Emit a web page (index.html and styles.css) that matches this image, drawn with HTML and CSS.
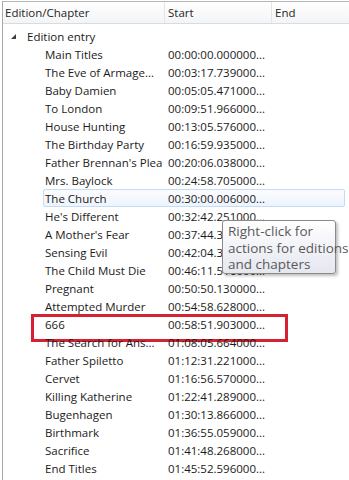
FILE: index.html
```html
<!DOCTYPE html>
<html lang="en">
<head>
  <meta charset="UTF-8" />
  <title>Chapters</title>
  <link rel="stylesheet" href="styles.css">
</head>
<body>
  <div class="tree">
    <div class="header">
      <div class="col">Edition/Chapter</div>
      <div class="col">Start</div>
      <div class="col">End</div>
    </div>

    <div class="body">
      <div class="edition">
        <span class="arrow"></span>
        <span>Edition entry</span>
      </div>

      <div class="row"><span class="name">Main Titles</span><span class="start">00:00:00.000000...</span></div>
      <div class="row"><span class="name">The Eve of Armage...</span><span class="start">00:03:17.739000...</span></div>
      <div class="row"><span class="name">Baby Damien</span><span class="start">00:05:05.471000...</span></div>
      <div class="row"><span class="name">To London</span><span class="start">00:09:51.966000...</span></div>
      <div class="row"><span class="name">House Hunting</span><span class="start">00:13:05.576000...</span></div>
      <div class="row"><span class="name">The Birthday Party</span><span class="start">00:16:59.935000...</span></div>
      <div class="row"><span class="name">Father Brennan's Plea</span><span class="start">00:20:06.038000...</span></div>
      <div class="row"><span class="name">Mrs. Baylock</span><span class="start">00:24:58.705000...</span></div>
      <div class="row hover"><span class="name">The Church</span><span class="start">00:30:00.006000...</span></div>
      <div class="row tip-anchor">
        <span class="name">He's Different</span><span class="start">00:32:42.251000...</span>
        <div class="tooltip">Right-click for<br>actions for editions<br>and chapters</div>
      </div>
      <div class="row"><span class="name">A Mother's Fear</span><span class="start">00:37:44.381000...</span></div>
      <div class="row"><span class="name">Sensing Evil</span><span class="start">00:42:04.307000...</span></div>
      <div class="row"><span class="name">The Child Must Die</span><span class="start">00:46:11.516000...</span></div>
      <div class="row"><span class="name">Pregnant</span><span class="start">00:50:50.130000...</span></div>
      <div class="row"><span class="name">Attempted Murder</span><span class="start">00:54:58.628000...</span></div>
      <div class="row marked"><span class="name">666</span><span class="start">00:58:51.903000...</span></div>
      <div class="row"><span class="name">The Search for Ans...</span><span class="start">01:08:05.664000...</span></div>
      <div class="row"><span class="name">Father Spiletto</span><span class="start">01:12:31.221000...</span></div>
      <div class="row"><span class="name">Cervet</span><span class="start">01:16:56.570000...</span></div>
      <div class="row"><span class="name">Killing Katherine</span><span class="start">01:22:41.289000...</span></div>
      <div class="row"><span class="name">Bugenhagen</span><span class="start">01:30:13.866000...</span></div>
      <div class="row"><span class="name">Birthmark</span><span class="start">01:36:55.059000...</span></div>
      <div class="row"><span class="name">Sacrifice</span><span class="start">01:41:48.268000...</span></div>
      <div class="row"><span class="name">End Titles</span><span class="start">01:45:52.596000...</span></div>
    </div>
  </div>
</body>
</html>
```

FILE: styles.css
```css
* {
  box-sizing: border-box;
}

body {
  margin: 0;
  background: #fff;
  font-family: "Open Sans", "Noto Sans", sans-serif;
  font-size: 11.5px;
  color: #1a1a1a;
}

.tree {
  margin: 1px 0 0 2px;
  border-top: 1px solid #b4b4b4;
  border-left: 1px solid #a9a9a9;
  height: 479px;
  overflow: hidden;
}

/* column header */
.header {
  display: grid;
  grid-template-columns: 162px 107px 1fr;
  height: 22px;
  background: linear-gradient(#ffffff, #f3f4f6);
  border-bottom: 1px solid #d8dbe0;
}
.header .col {
  display: flex;
  align-items: center;
  padding-left: 3px;
  border-right: 1px solid #e2e4e8;
  color: #262626;
}
.header .col:first-child {
  padding-left: 2px;
}
.header .col:last-child {
  border-right: none;
}

.body {
  padding-top: 3px;
}

.edition {
  display: flex;
  align-items: center;
  height: 18px;
  padding-left: 8px;
  gap: 11px;
}
.arrow {
  width: 0;
  height: 0;
  border-left: 5px solid transparent;
  border-bottom: 5px solid #404040;
}

.row {
  position: relative;
  display: grid;
  grid-template-columns: 122px 1fr;
  align-items: center;
  height: 18px;
  margin-left: 40px;
  padding-left: 2px;
  white-space: nowrap;
}
.row .start {
  padding-left: 1px;
}

.row.hover {
  border: 1px solid #c4dcf4;
  border-radius: 2px;
  padding-left: 1px;
  background: linear-gradient(#fbfcfe, #eef4fc);
  margin-right: 4px;
}

/* annotation box around one chapter */
.row.marked::after {
  content: "";
  position: absolute;
  left: -12px;
  top: -1px;
  width: 251px;
  height: 22px;
  border: 3px solid #d42232;
}

.tooltip {
  position: absolute;
  left: 179px;
  top: 13px;
  width: 114px;
  height: 54px;
  padding: 2px 5px 0 5px;
  line-height: 16.5px;
  font-size: 13.5px;
  color: #595959;
  background: linear-gradient(#ffffff, #e5e7f0);
  border: 1px solid #8a8a8a;
  border-radius: 3px;
  box-shadow: 2px 2px 3px rgba(0, 0, 0, 0.25);
  white-space: nowrap;
  z-index: 2;
}
```
